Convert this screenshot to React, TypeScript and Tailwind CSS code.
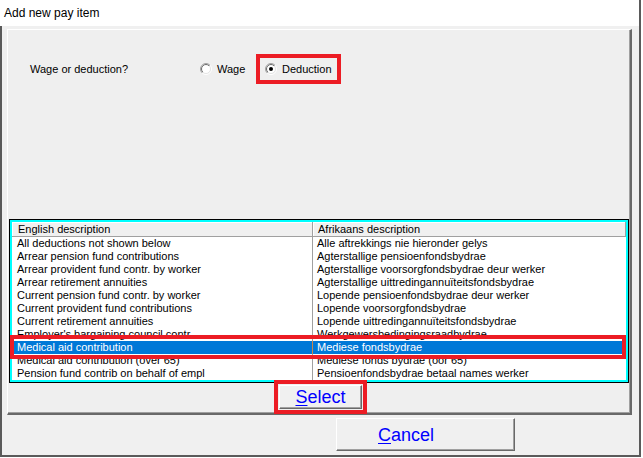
import React from "react";

const rows: [string, string][] = [
  ["All deductions not shown below", "Alle aftrekkings nie hieronder gelys"],
  ["Arrear pension fund contributions", "Agterstallige pensioenfondsbydrae"],
  ["Arrear provident fund contr. by worker", "Agterstallige voorsorgfondsbydrae deur werker"],
  ["Arrear retirement annuities", "Agterstallige uittredingannuïteitsfondsbydrae"],
  ["Current pension fund contr. by worker", "Lopende pensioenfondsbydrae deur werker"],
  ["Current provident fund contributions", "Lopende voorsorgfondsbydrae"],
  ["Current retirement annuities", "Lopende uittredingannuïteitsfondsbydrae"],
  ["Employer's bargaining council contr.", "Werkgewersbedingingsraadbydrae"],
  ["Medical aid contribution", "Mediese fondsbydrae"],
  ["Medical aid contribution (over 65)", "Mediese fonds bydrae (oor 65)"],
  ["Pension fund contrib on behalf of empl", "Pensioenfondsbydrae betaal names werker"],
];

const SELECTED = 8;

function Radio({ id, checked }: { id: string; checked?: boolean }) {
  return (
    <svg width="12" height="12" viewBox="0 0 12 12" className="shrink-0">
      <defs>
        <linearGradient id={`${id}-o`} x1="0" y1="0" x2="1" y2="1">
          <stop offset="0.5" stopColor="#a0a0a0" />
          <stop offset="0.5" stopColor="#ffffff" />
        </linearGradient>
        <linearGradient id={`${id}-i`} x1="0" y1="0" x2="1" y2="1">
          <stop offset="0.5" stopColor="#696969" />
          <stop offset="0.5" stopColor="#e3e3e3" />
        </linearGradient>
      </defs>
      <circle cx="6" cy="6" r="5.5" fill="none" stroke={`url(#${id}-o)`} />
      <circle cx="6" cy="6" r="4.5" fill="#ffffff" stroke={`url(#${id}-i)`} />
      {checked && <circle cx="6" cy="6" r="2" fill="#000000" />}
    </svg>
  );
}

const btn =
  "bg-[#f0f0f0] border-t border-l border-t-white border-l-white border-r border-b border-r-[#696969] border-b-[#696969] shadow-[inset_-1px_-1px_0_#a0a0a0] flex items-center text-[18px] leading-none text-[#0000ff]";

export default function App() {
  return (
    <div className="w-[643px] h-[458px] bg-white overflow-hidden font-['Liberation_Sans',Arial,sans-serif] text-black">
      {/* title bar */}
      <div className="w-[641px] h-[26px] border-r-2 border-[#5a5a5a] pl-[4px] flex items-center text-[12px] leading-none">
        Add new pay item
      </div>

      {/* dialog body */}
      <div className="w-[641px] h-[431px] border-x-2 border-b-2 border-[#5a5a5a] bg-[#f0f0f0] pt-[3px] pl-[5px] flex flex-col">
        {/* raised panel */}
        <div className="w-[625px] h-[386px] border-t border-l border-t-white border-l-white border-r-2 border-b-2 border-r-[#696969] border-b-[#696969] bg-[#efefef] shadow-[inset_-1px_-1px_0_#a0a0a0] flex flex-col">
          {/* wage / deduction choice */}
          <div className="mt-[24px] h-[30px] pl-[22px] flex items-center text-[11px] leading-none">
            <span className="w-[170px]">Wage or deduction?</span>
            <Radio id="r-wage" />
            <span className="ml-[5px] w-[48px]">Wage</span>
            <div className="relative h-full w-[67px] flex items-center">
              <Radio id="r-ded" checked />
              <span className="ml-[5px]">Deduction</span>
              <div className="absolute top-0 bottom-0 -left-[9px] -right-[9px] border-4 border-[#ec1c24]" />
            </div>
          </div>

          {/* list of pay items */}
          <div className="mt-[135px] ml-[1px] w-[620px] h-[164px] border border-black">
            <div className="h-full border-2 border-[#00ffff] bg-white flex flex-col text-[11px]">
              <div className="h-[15px] flex bg-[#f0f0f0] leading-[14px]">
                <div className="w-[301px] pl-[6px] border-r border-b border-[#a0a0a0] shadow-[inset_1px_1px_0_#ffffff]">
                  English description
                </div>
                <div className="flex-1 pl-[5px] border-r border-b border-[#a0a0a0] shadow-[inset_1px_1px_0_#ffffff]">
                  Afrikaans description
                </div>
              </div>
              {rows.map(([en, af], i) => {
                const sel = i === SELECTED;
                return (
                  <div
                    key={en}
                    className={
                      sel
                        ? "relative h-[13px] flex leading-[13px] bg-[#0078d7] text-white"
                        : "h-[13px] flex leading-[13px]"
                    }
                  >
                    <div
                      className={
                        sel
                          ? "w-[301px] pl-[5px] border-r border-[#c8864a] whitespace-nowrap overflow-hidden"
                          : "w-[301px] pl-[5px] border-r border-[#a0a0a0] whitespace-nowrap overflow-hidden"
                      }
                    >
                      {en}
                    </div>
                    <div className="flex-1 pl-[4px] whitespace-nowrap overflow-hidden">{af}</div>
                    {sel && (
                      <div className="absolute -top-[6px] -bottom-[5px] -left-[2px] right-0 border-4 border-[#ec1c24]" />
                    )}
                  </div>
                );
              })}
            </div>
          </div>

          {/* select */}
          <div className="relative mt-[2px] ml-[271px] w-[83px] h-[24px]">
            <div className={`${btn} w-full h-full justify-center`}>
              <span>
                <u className="underline-offset-2">S</u>elect
              </span>
            </div>
            <div className="absolute -top-[5px] -bottom-[5px] -left-[5px] -right-[5px] border-4 border-[#ec1c24]" />
          </div>
        </div>

        {/* cancel */}
        <div className={`${btn} mt-[3px] ml-[329px] w-[179px] h-[33px] pl-[41px]`}>
          <span>
            <u className="underline-offset-2">C</u>ancel
          </span>
        </div>
      </div>
    </div>
  );
}
